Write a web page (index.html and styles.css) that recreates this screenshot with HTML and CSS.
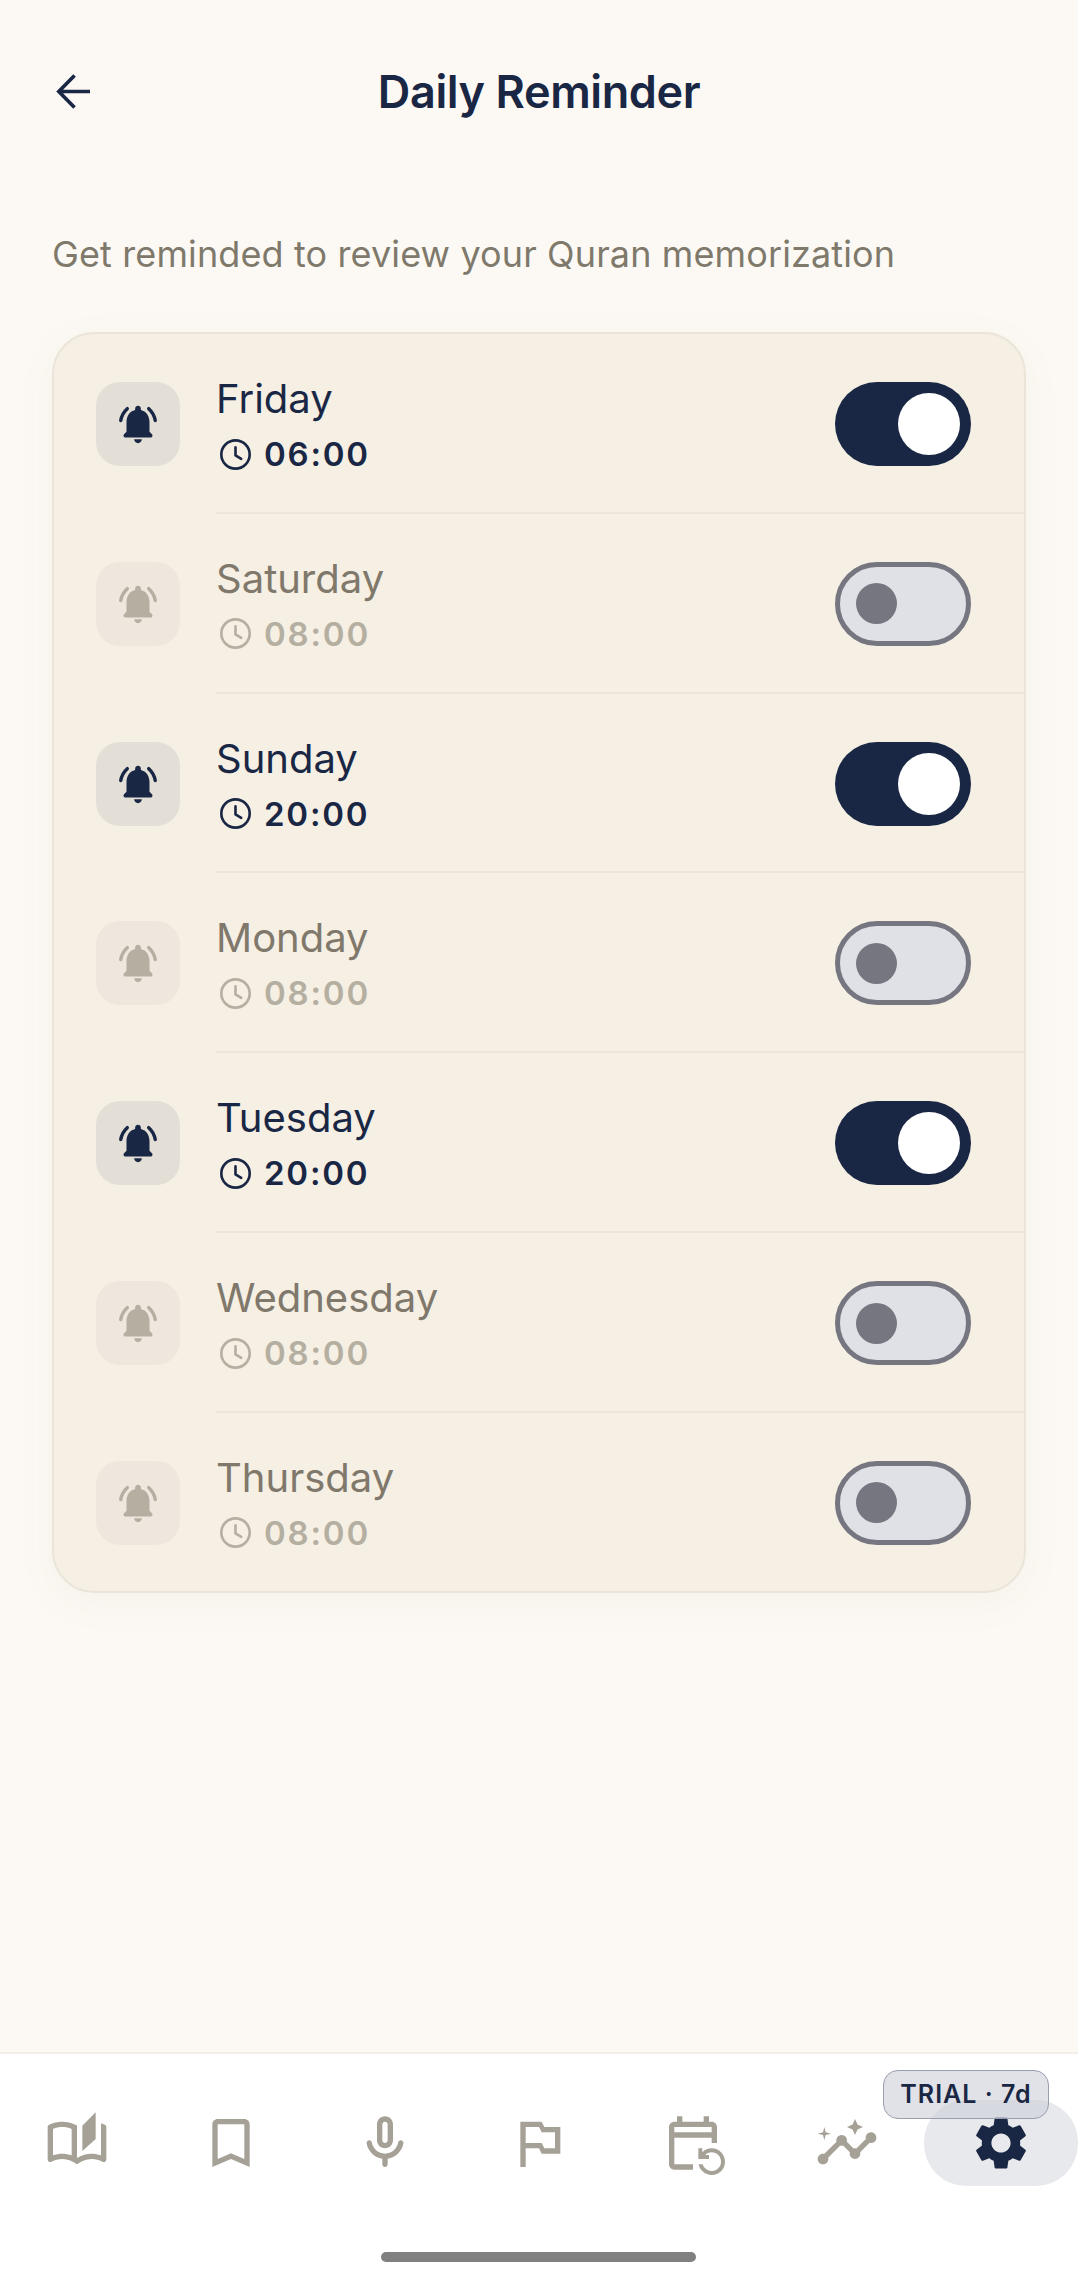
FILE: index.html
```html
<!DOCTYPE html>
<html lang="en">
<head>
    <meta charset="UTF-8">
    <meta name="viewport" content="width=device-width, initial-scale=1.0">
    <title>Daily Reminder</title>
    <link rel="stylesheet" href="styles.css">
</head>
<body>
    <svg class="sprites" aria-hidden="true">
        <symbol id="i-bell" viewBox="0 0 24 24">
            <path fill="currentColor" d="M18 16v-5c0-3.07-1.64-5.64-4.5-6.32V4c0-.83-.67-1.5-1.5-1.5s-1.5.67-1.5 1.5v.68C7.63 5.36 6 7.92 6 11v5l-1.29 1.29c-.63.63-.19 1.71.7 1.71h13.17c.89 0 1.34-1.08.71-1.71L18 16z"/>
            <path fill="currentColor" d="M12 22c1.1 0 2-.9 2-2h-4c0 1.1.9 2 2 2z"/>
            <path fill="none" stroke="currentColor" stroke-width="1.8" stroke-linecap="round" d="M3 10.2C3.4 7.8 4.6 5.6 6.4 4M21 10.2c-.4-2.4-1.6-4.6-3.4-6.2"/>
        </symbol>
        <symbol id="i-clock" viewBox="0 0 24 24">
            <circle cx="12" cy="12" r="9.2" fill="none" stroke="currentColor" stroke-width="1.7"/>
            <path fill="none" stroke="currentColor" stroke-width="1.7" stroke-linecap="round" stroke-linejoin="round" d="M12 7.4v5.2l3.7 2.2"/>
        </symbol>
    </svg>

    <div class="page">
        <header class="top-bar">
            <svg class="back" viewBox="0 0 24 24"><path fill="none" stroke="currentColor" stroke-width="2.5" stroke-linejoin="miter" d="M24 12H2.6M13.4 1 2.6 12l10.8 11"/></svg>
            <h1>Daily Reminder</h1>
        </header>

        <p class="subtitle">Get reminded to review your Quran memorization</p>

        <section class="card">
            <div class="row on">
                <div class="bell-box"><svg class="bell"><use href="#i-bell"/></svg></div>
                <div class="row-body">
                    <div class="row-text">
                        <div class="day">Friday</div>
                        <div class="time"><svg class="clock"><use href="#i-clock"/></svg>06:00</div>
                    </div>
                    <div class="toggle"><span class="knob"></span></div>
                </div>
            </div>
            <div class="row">
                <div class="bell-box"><svg class="bell"><use href="#i-bell"/></svg></div>
                <div class="row-body">
                    <div class="row-text">
                        <div class="day">Saturday</div>
                        <div class="time"><svg class="clock"><use href="#i-clock"/></svg>08:00</div>
                    </div>
                    <div class="toggle"><span class="knob"></span></div>
                </div>
            </div>
            <div class="row on">
                <div class="bell-box"><svg class="bell"><use href="#i-bell"/></svg></div>
                <div class="row-body">
                    <div class="row-text">
                        <div class="day">Sunday</div>
                        <div class="time"><svg class="clock"><use href="#i-clock"/></svg>20:00</div>
                    </div>
                    <div class="toggle"><span class="knob"></span></div>
                </div>
            </div>
            <div class="row">
                <div class="bell-box"><svg class="bell"><use href="#i-bell"/></svg></div>
                <div class="row-body">
                    <div class="row-text">
                        <div class="day">Monday</div>
                        <div class="time"><svg class="clock"><use href="#i-clock"/></svg>08:00</div>
                    </div>
                    <div class="toggle"><span class="knob"></span></div>
                </div>
            </div>
            <div class="row on">
                <div class="bell-box"><svg class="bell"><use href="#i-bell"/></svg></div>
                <div class="row-body">
                    <div class="row-text">
                        <div class="day">Tuesday</div>
                        <div class="time"><svg class="clock"><use href="#i-clock"/></svg>20:00</div>
                    </div>
                    <div class="toggle"><span class="knob"></span></div>
                </div>
            </div>
            <div class="row">
                <div class="bell-box"><svg class="bell"><use href="#i-bell"/></svg></div>
                <div class="row-body">
                    <div class="row-text">
                        <div class="day">Wednesday</div>
                        <div class="time"><svg class="clock"><use href="#i-clock"/></svg>08:00</div>
                    </div>
                    <div class="toggle"><span class="knob"></span></div>
                </div>
            </div>
            <div class="row">
                <div class="bell-box"><svg class="bell"><use href="#i-bell"/></svg></div>
                <div class="row-body">
                    <div class="row-text">
                        <div class="day">Thursday</div>
                        <div class="time"><svg class="clock"><use href="#i-clock"/></svg>08:00</div>
                    </div>
                    <div class="toggle"><span class="knob"></span></div>
                </div>
            </div>
        </section>

        <nav class="bottom-nav">
            <div class="tabs">
                <div class="tab"><svg viewBox="0 0 24 24"><path d="M22.47 5.2C22 4.96 21.51 4.76 21 4.6v12.03C19.86 16.21 18.69 16 17.5 16c-1.9 0-3.78.54-5.5 1.58V5.48C10.38 4.55 8.51 4 6.5 4c-1.79 0-3.48.44-4.97 1.2-.33.16-.53.51-.53.88v12.08c0 .58.47.99 1 .99.16 0 .32-.04.48-.12C3.69 18.4 5.05 18 6.5 18c2.07 0 3.98.82 5.5 2 1.52-1.18 3.43-2 5.5-2 1.45 0 2.81.4 4.02 1.04.16.08.32.12.48.12.52 0 1-.41 1-.99V6.08c0-.37-.2-.72-.53-.88zM10 16.62C8.86 16.21 7.69 16 6.5 16c-1.19 0-2.36.21-3.5.62V6.71C4.11 6.24 5.28 6 6.5 6c1.2 0 2.39.25 3.5.72v9.9zM19 .5l-5 5V15l5-4.5V.5z"/></svg></div>
                <div class="tab"><svg viewBox="0 0 24 24"><path d="M17 3H7c-1.1 0-2 .9-2 2v16l7-3 7 3V5c0-1.1-.9-2-2-2zm0 15l-5-2.18L7 18V5h10v13z"/></svg></div>
                <div class="tab"><svg viewBox="0 0 24 24"><path d="M12 14c1.66 0 3-1.34 3-3V5c0-1.66-1.34-3-3-3S9 3.34 9 5v6c0 1.66 1.34 3 3 3zm-1-9c0-.55.45-1 1-1s1 .45 1 1v6c0 .55-.45 1-1 1s-1-.45-1-1V5zm6.91 6c-.49 0-.9.36-.98.85C16.52 14.2 14.47 16 12 16s-4.52-1.8-4.93-4.15c-.08-.49-.49-.85-.98-.85-.61 0-1.09.54-1 1.14.49 3 2.89 5.35 5.91 5.78V20c0 .55.45 1 1 1s1-.45 1-1v-2.08c3.02-.43 5.42-2.78 5.91-5.78.1-.6-.39-1.14-1-1.14z"/></svg></div>
                <div class="tab"><svg viewBox="0 0 24 24"><path d="M14 6l-1-2H5v17h2v-7h5l1 2h7V6h-6zm4 8h-4l-1-2H7V6h5l1 2h5v6z"/></svg></div>
                <div class="tab"><svg viewBox="0 0 24 24"><path d="M21 12V6c0-1.1-.9-2-2-2h-1V2h-2v2H8V2H6v2H5C3.9 4 3 4.9 3 6v14c0 1.1.9 2 2 2h7v-2H5V10h14v2h2zm-2-4H5V6h14v2zm-3.36 12c.43 1.45 1.77 2.5 3.36 2.5 1.93 0 3.5-1.57 3.5-3.5s-1.57-3.5-3.5-3.5c-.95 0-1.82.38-2.45 1H18V18h-4v-4h1.5v1.43C16.4 14.55 17.64 14 19 14c2.76 0 5 2.24 5 5s-2.24 5-5 5c-2.42 0-4.44-1.72-4.9-4h1.54z"/></svg></div>
                <div class="tab"><svg viewBox="0 0 24 24"><path d="M21 8c-1.45 0-2.26 1.44-1.93 2.51l-3.55 3.56c-.3-.09-.74-.09-1.04 0l-2.55-2.55C12.27 10.45 11.46 9 10 9c-1.45 0-2.27 1.44-1.93 2.52l-4.56 4.55C2.44 15.74 1 16.55 1 18c0 1.1.9 2 2 2 1.45 0 2.26-1.44 1.93-2.51l4.55-4.56c.3.09.74.09 1.04 0l2.55 2.55C12.73 16.55 13.54 18 15 18c1.45 0 2.27-1.44 1.93-2.52l3.56-3.55c1.07.33 2.51-.48 2.51-1.93 0-1.1-.9-2-2-2z"/><path d="M15 9l.94-2.07L18 6l-2.06-.93L15 3l-.92 2.07L12 6l2.08.93zM3.5 11L4 9l2-.5L4 8l-.5-2L3 8l-2 .5L3 9z"/></svg></div>
                <div class="tab active"><svg viewBox="0 0 24 24"><path d="M19.14 12.94c.04-.3.06-.61.06-.94 0-.32-.02-.64-.07-.94l2.03-1.58c.18-.14.23-.41.12-.61l-1.92-3.32c-.12-.22-.37-.29-.59-.22l-2.39.96c-.5-.38-1.03-.7-1.62-.94l-.36-2.54c-.04-.24-.24-.41-.48-.41h-3.84c-.24 0-.43.17-.47.41l-.36 2.54c-.59.24-1.13.57-1.62.94l-2.39-.96c-.22-.08-.47 0-.59.22L2.74 8.87c-.12.21-.08.47.12.61l2.03 1.58c-.05.3-.09.63-.09.94s.02.64.07.94l-2.03 1.58c-.18.14-.23.41-.12.61l1.92 3.32c.12.22.37.29.59.22l2.39-.96c.5.38 1.03.7 1.62.94l.36 2.54c.05.24.24.41.48.41h3.84c.24 0 .44-.17.47-.41l.36-2.54c.59-.24 1.13-.56 1.62-.94l2.39.96c.22.08.47 0 .59-.22l1.92-3.32c.12-.22.07-.47-.12-.61l-2.01-1.58zM12 15.6c-1.98 0-3.6-1.62-3.6-3.6s1.62-3.6 3.6-3.6 3.6 1.62 3.6 3.6-1.62 3.6-3.6 3.6z"/></svg></div>
            </div>
            <div class="trial-badge">TRIAL · 7d</div>
            <div class="home-bar"></div>
        </nav>
    </div>
</body>
</html>
```

FILE: styles.css
```css
* {
    margin: 0;
    padding: 0;
    box-sizing: border-box;
}

body {
    font-family: Inter, "Noto Sans", sans-serif;
    background: #fcf9f4;
    color: #1a2744;
}

.sprites {
    display: none;
}

.page {
    height: 2272px;
    display: flex;
    flex-direction: column;
    overflow: hidden;
}

.top-bar {
    position: relative;
    height: 182px;
    display: flex;
    align-items: center;
    justify-content: center;
}

.back {
    position: absolute;
    left: 54px;
    top: 74px;
    width: 37px;
    height: 35px;
    color: #1a2744;
}

h1 {
    font-size: 45px;
    font-weight: 600;
    letter-spacing: -0.4px;
}

.subtitle {
    margin: 49px 52px 55px;
    font-size: 36px;
    line-height: 46px;
    color: #7f796c;
    letter-spacing: 0.12px;
}

.card {
    margin: 0 52px;
    background: #f5efe4;
    border: 2px solid #ebe5d9;
    border-radius: 42px;
    box-shadow: 0 10px 40px rgba(120, 100, 60, 0.05);
    overflow: hidden;
}

.row {
    display: flex;
    align-items: flex-start;
}

.bell-box {
    flex: none;
    width: 84px;
    height: 84px;
    margin: 48px 36px 0 42px;
    border-radius: 24px;
    background: #ede7dd;
    color: #b5afa2;
    display: flex;
    align-items: center;
    justify-content: center;
}

.on .bell-box {
    background: #e3dfd7;
    color: #1a2744;
}

.bell {
    width: 46px;
    height: 46px;
}

.row-body {
    flex: 1;
    height: 179.83px;
    display: flex;
    align-items: flex-start;
    justify-content: space-between;
    padding: 48px 53px 0 0;
    border-bottom: 2px solid #ece6da;
}

.row:last-child .row-body {
    height: 178px;
    border-bottom: none;
}

.row-text {
    margin-top: -8px;
}

.day {
    font-size: 40px;
    line-height: 50px;
    color: #7f786b;
}

.on .day {
    color: #1a2744;
}

.time {
    display: flex;
    align-items: center;
    gap: 10px;
    margin-top: 7px;
    font-size: 33px;
    line-height: 46px;
    font-weight: 600;
    letter-spacing: 1.8px;
    color: #b5afa2;
}

.on .time {
    color: #1a2744;
}

.clock {
    width: 37px;
    height: 37px;
    margin-left: 1px;
}

.toggle {
    flex: none;
    width: 136px;
    height: 84px;
    border-radius: 42px;
    background: #e0e1e6;
    border: 5px solid #757680;
    display: flex;
    align-items: center;
    padding-left: 16px;
}

.knob {
    width: 41px;
    height: 41px;
    border-radius: 50%;
    background: #757680;
}

.on .toggle {
    background: #1a2744;
    border: none;
    justify-content: flex-end;
    padding: 0 11px 0 0;
}

.on .knob {
    width: 62px;
    height: 62px;
    background: #fff;
}

.bottom-nav {
    position: relative;
    margin-top: auto;
    height: 220px;
    background: #fff;
    border-top: 2px solid #f3efe8;
}

.tabs {
    display: grid;
    grid-template-columns: repeat(7, 1fr);
    padding-top: 46px;
}

.tab {
    display: flex;
    align-items: center;
    justify-content: center;
    height: 86px;
    fill: #a5a196;
}

.tab svg {
    width: 64px;
    height: 64px;
}

.tab.active {
    fill: #1a2744;
    background: #e8e9ed;
    border-radius: 42px;
}

.trial-badge {
    position: absolute;
    left: 883px;
    top: 16px;
    width: 166px;
    height: 49px;
    margin-top: 0;
    border-radius: 15px;
    border: 1.5px solid #9a9fb0;
    background: rgba(203, 206, 215, 0.6);
    font-size: 25px;
    font-weight: 600;
    letter-spacing: 1px;
    line-height: 46px;
    text-align: center;
}

.home-bar {
    width: 315px;
    height: 10px;
    margin: 66px 0 0 381px;
    border-radius: 5px;
    background: #808080;
}
```
